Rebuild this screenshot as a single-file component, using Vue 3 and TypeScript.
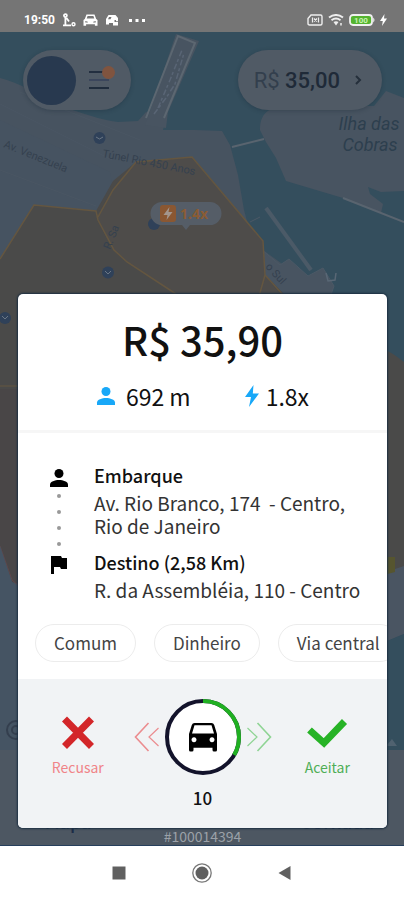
<script setup lang="ts">
import { computed, ref } from 'vue'

interface Stop {
  kind: 'pickup' | 'dropoff'
  title: string
  address: string
}

const stops: Stop[] = [
  { kind: 'pickup', title: 'Embarque', address: 'Av. Rio Branco, 174 \u00a0- Centro,\nRio de Janeiro' },
  { kind: 'dropoff', title: 'Destino (2,58 Km)', address: 'R. da Assembléia, 110 - Centro' },
]

const tags: string[] = ['Comum', 'Dinheiro', 'Via central']

const totalSeconds = 15
const secondsLeft = ref(10)

const radius = 36
const circumference = 2 * Math.PI * radius
const elapsedDash = computed(() => {
  const done = ((totalSeconds - secondsLeft.value) / totalSeconds) * circumference
  return `${done} ${circumference - done}`
})
</script>

<template>
  <div class="phone">
    <div class="status">
      <div class="status-group">
        <span class="clock">19:50</span>
        <svg width="14" height="14" viewBox="0 0 14 14" fill="none" stroke="#fff" stroke-width="1.8">
          <circle cx="3.4" cy="2.6" r="1.5" />
          <path d="M3.4 4v7.6M1 12.3h8M4.500 5l2.500 3.500" />
          <circle cx="11.500" cy="11.300" r="1.500" stroke-width="1.400" />
        </svg>
        <svg width="15" height="14" viewBox="0 0 15 14" fill="#fff" fill-rule="evenodd">
          <path d="M3.500 1.500h8l1.700 4.500 1.300 1v5.800h-2.600v-1.600H3.100v1.600H.5V7l1.300-1zM4.600 3l-.9 2.600h7.600L10.400 3zM2.300 8v1.600h2.500V8.800zM12.700 8v1.600h-2.500V8.800z" />
        </svg>
        <svg width="14" height="14" viewBox="0 0 14 14" fill="#fff" fill-rule="evenodd">
          <path d="M3.500 2h7l2.500 3v3.200h-2V7H9.500v2H13v3.500H8V10H4v1.500H1V6zM4 4L3 6.200h2.500L6.500 4z" />
        </svg>
        <svg class="more" width="16" height="14" viewBox="0 0 16 14" fill="#fff">
          <path d="M0 6h3v3H0zM6.500 6h3v3h-3zM13 6h3v3h-3z" />
        </svg>
      </div>
      <div class="status-group tight">
        <svg width="16" height="12" viewBox="0 0 16 12" fill="none" stroke="#eee" stroke-width="1.400">
          <path d="M4 1h9.500q1.500 0 1.500 1.500v7q0 1.500-1.500 1.500h-11Q1 11 1 9.500V4.500z" />
          <path d="M5.500 3.500v5M11.500 3.500v5M7 4.500l3 3M10 4.500l-3 3" stroke-width="1.200" />
        </svg>
        <svg width="16" height="12" viewBox="0 0 16 12" fill="none" stroke="#eee" stroke-width="2">
          <path d="M1 3.500q7-5 14 0M3.500 6.200q4.500-3.300 9 0" />
          <path d="M5.500 8L8 11.500 10.500 8Q8 6.500 5.500 8z" fill="#eee" stroke="none" />
          <path d="M13 9v2.500" stroke-width="1.500" />
        </svg>
        <svg width="26" height="12" viewBox="0 0 26 12">
          <rect x="1" y="1" width="22" height="10" rx="3" fill="#54b32f" stroke="#f0f0f0" stroke-width="1.800" />
          <path d="M24.200 3.500q2.600 2.500 0 5z" fill="#f0f0f0" />
          <text x="12" y="9" class="charge">100</text>
        </svg>
        <svg width="7" height="12" viewBox="0 0 7 12" fill="#fff"><path d="M4.500 0L0 7h2.800L2 12l5-7.500H4z" /></svg>
      </div>
    </div>

    <main class="stage">
      <svg class="map" viewBox="0 32 404 814" preserveAspectRatio="xMidYMin slice" aria-hidden="true">
        <rect y="32" width="404" height="814" fill="#344e5d" />
        <path d="M0 78C18 82 42 96 60 106C80 112 100 120 118 122L138 121 146 112 166 118 163 130H195L222 131 230 145 238 175 244 210 250 232 263 250 340 306V846H0z" fill="#475360" />
        <path d="M0 120L110 172 113 190 98 216 36 210 0 265z" fill="#465361" />
        <path d="M0 104L112 160M20 92L140 140M0 170L96 206" stroke="#4a5663" fill="none" />
        <path d="M145 125L152 105 176 34 199 41 168 112 166 128z" fill="#485461" />
        <path d="M146 118L178 36 195 43 164 118" fill="none" stroke="#5c6771" stroke-width="2" />
        <path d="M154 114L166 98 175 84 184 53M158 108L170 80 182 50" fill="none" stroke="#596575" stroke-width="1.500" stroke-dasharray="6 2 3 3" />
        <path d="M260 130C260 112 270 106 290 106H374L386 91 404 98V191L381 192 368 187 370 194 383 204 381 213 404 222 343 198 286 181 276 158 266 142z" fill="#485461" />
        <path d="M232 147l32-8M343 198l61 24" stroke="#59646f" stroke-width="2" />
        <path d="M266 208L311 270" stroke="#4b5a67" stroke-width="4" />
        <path d="M250 222l10-5M262 250l18 15 9-6 19 17 15-8 11 18-7 20h-70z" fill="#485461" stroke="#4b5966" />
        <path d="M326 273l2 8 7-1 1-7" fill="none" stroke="#596775" stroke-width="1.500" />
        <path d="M0 259L34 205 96 211 113 181 136 162 192 157 263 241 265 275 284 294 404 360V570L360 580H18L12 580 0 544z" fill="#4a4a49" />
        <path d="M96 217L113 190 136 162 192 157 263 241 265 275 280 294H176L127 262 113 250z" fill="#4e4c4a" />
        <path d="M0 259L34 205 96 211L98 220 114 250 127 262 176 294M98 217L113 190 136 162 192 157 263 241 265 275 284 296M265 275L258 300" fill="none" stroke="#645640" stroke-width="1.500" />
        <path d="M0 389L22 389V585L12 582 0 546z" fill="#494647" />
        <path d="M0 386h24" stroke="#645640" />
        <path d="M0 546L12 580 20 587" fill="none" stroke="#60484c" />
        <path d="M0 546L12 582 22 589V846H0z" fill="#455463" />
        <path d="M380 294h24v68l-24-18z" fill="#344e5d" />
        <path d="M386 572l18-6v68l-24 10z" fill="#4a5562" />
        <path d="M380 644l24-10v118h-24z" fill="#344e5d" />
        <path d="M380 557h15v15l-15 4z" fill="#56552f" />
        <path d="M386 746l6-7 5 7z" fill="#506270" />
        <path d="M0 750h404v96H0z" fill="#4d5762" />
        <g fill="none" stroke="#343f4e" stroke-width="2"><circle cx="16" cy="730" r="9" /><circle cx="16" cy="730" r="4" /></g>
        <g fill="#2f4159"><circle cx="99.500" cy="138" r="6" /><circle cx="108" cy="272.500" r="6" /><circle cx="154" cy="224" r="6" /><circle cx="5" cy="318" r="6" /></g>
        <path d="M96 137l3.500 2 3.500-2M105 271l3 3 3-3M2 316l3 3 3-3" fill="none" stroke="#6b7785" />
        <path d="M162 202h48a11 11 0 0 1 0 23h-20l-4 5-4-5h-20a11 11 0 0 1 0-23z" fill="#555d67" />
        <rect x="160" y="205" width="16" height="17" rx="3" fill="#8a5732" />
        <path d="M169.500 207l-6 8h4l-1 5 6-8h-4z" fill="#a3968d" />
        <text x="180" y="219" class="surge">1.4x</text>
        <text x="3" y="147" transform="rotate(22 3 147)" class="road">Av. Venezuela</text>
        <text x="102" y="157" transform="rotate(11 102 157)" class="road">Túnel Rio 450 Anos</text>
        <text x="265" y="267" transform="rotate(48 265 267)" class="road">o Sul</text>
        <text x="110" y="250" transform="rotate(-68 110 250)" class="road">R. Sa</text>
        <text x="369" y="130" class="island">Ilha das</text>
        <text x="370" y="151" class="island">Cobras</text>
        <text x="68" y="829" class="tab">Mapa</text>
        <text x="338" y="829" class="tab">Jornada</text>
      </svg>

      <header class="top">
        <button class="pill profile" type="button" aria-label="Menu">
          <span class="avatar"></span>
          <svg width="28" height="28" viewBox="0 0 28 28">
            <path d="M4 6h20" stroke="#232f40" stroke-width="2" />
            <path d="M4 14h20" stroke="#3b465c" stroke-width="2" />
            <path d="M4 22h20" stroke="#202d3d" stroke-width="2" />
            <circle cx="23.500" cy="6.500" r="6.500" fill="#80543f" />
          </svg>
        </button>
        <button class="pill balance" type="button">
          <span><span class="currency">R$</span> 35,00</span>
          <svg width="8" height="12" viewBox="0 0 8 12" fill="none" stroke="#252f3b" stroke-width="2"><path d="M2 2l4 4-4 4" /></svg>
        </button>
      </header>

      <section class="offer" role="dialog" aria-labelledby="price">
        <div class="summary">
          <h1 id="price">R$ 35,90</h1>
          <div class="stats">
            <span class="stat">
              <svg width="20" height="20" viewBox="0 0 20 20" fill="#18a8f8"><circle cx="10" cy="5.500" r="4.500" /><path d="M1 19v-2.500C1 13.500 6 12 10 12s9 1.500 9 4.500V19z" /></svg>
              692 m
            </span>
            <span class="stat surge-stat">
              <svg width="14" height="22" viewBox="0 0 14 22" fill="#18a8f8"><path d="M8.500 0L0 12h6L4 22 14 8.500H7.800z" /></svg>
              1.8x
            </span>
          </div>
        </div>

        <div class="details">
          <div v-for="stop in stops" :key="stop.kind" class="stop" :class="stop.kind">
            <div class="track">
              <svg v-if="stop.kind === 'pickup'" width="18" height="18" viewBox="0 0 18 18"><circle cx="9" cy="4.500" r="4.500" /><path d="M0 18v-2.500C0 12.500 5 11 9 11s9 1.500 9 4.500V18z" /></svg>
              <svg v-else width="18" height="18" viewBox="0 0 18 18"><path d="M1 0h10l1 2h5v11h-6l-1-2H4v7H1z" /></svg>
              <div v-if="stop.kind === 'pickup'" class="dots"><i v-for="n in 4" :key="n"></i></div>
            </div>
            <div>
              <h2>{{ stop.title }}</h2>
              <p>{{ stop.address }}</p>
            </div>
          </div>
          <ul class="tags">
            <li v-for="tag in tags" :key="tag">{{ tag }}</li>
          </ul>
        </div>

        <div class="actions">
          <button class="action decline" type="button">
            <svg width="42" height="34" viewBox="0 0 42 34"><path d="M7.500 3L34.500 30.500M34.500 3L7.500 30.500" stroke="#d32629" stroke-width="7" /></svg>
            Recusar
          </button>
          <div class="countdown">
            <div class="dial">
              <svg width="26" height="30" viewBox="0 0 26 30" fill="none" stroke="#eb8c8f"><path d="M14.500 1L1.500 15l13 14" stroke-width="1.600" /><path d="M24.500 6L15 15l9.500 9" stroke-width="1.200" /></svg>
              <svg width="78" height="78" viewBox="-39 -39 78 78">
                <circle :r="radius" fill="#fff" stroke="#13132b" stroke-width="4" />
                <circle :r="radius" fill="none" stroke="#20b022" stroke-width="4" :stroke-dasharray="elapsedDash" transform="rotate(-90)" />
                <path fill-rule="evenodd" d="M-8.500-14h17q2 0 2.700 2L14-3v16q0 1.500-1.500 1.500h-1.500q-1.500 0-1.500-1.500v-2.300h-19V13q0 1.500-1.500 1.500h-1.500Q-14 14.500-14 13V-3l2.800-9q.7-2 2.700-2zM-8.500-11.800L-11-3.500h22L8.500-11.800zM-9 .3a2.500 2.500 0 1 0 .01 0zM9 .3a2.500 2.500 0 1 0 .01 0z" />
              </svg>
              <svg width="26" height="30" viewBox="0 0 26 30" fill="none" stroke="#8fd494"><path d="M11.500 1l13 14-13 14" stroke-width="1.600" /><path d="M1.500 6L11 15l-9.500 9" stroke-width="1.200" /></svg>
            </div>
            <span class="seconds">{{ secondsLeft }}</span>
          </div>
          <button class="action accept" type="button">
            <svg width="42" height="34" viewBox="0 0 42 34" fill="none"><path d="M3.500 14L18 27 38.500 5.500" stroke="#27b326" stroke-width="7" /></svg>
            Aceitar
          </button>
        </div>
      </section>
      <p class="ride-id">#100014394</p>
    </main>

    <nav class="system">
      <button type="button" aria-label="Recentes"><svg width="20" height="20" viewBox="0 0 20 20"><path d="M3.500 3.500h13v13h-13z" fill="#606060" /></svg></button>
      <button type="button" aria-label="Início"><svg width="20" height="20" viewBox="0 0 20 20"><circle cx="10" cy="10" r="9.200" fill="none" stroke="#777" stroke-width="1.300" /><circle cx="10" cy="10" r="6.500" fill="#606060" /></svg></button>
      <button type="button" aria-label="Voltar"><svg width="20" height="20" viewBox="0 0 20 20"><path d="M15.500 3v14L3.500 10z" fill="#606060" /></svg></button>
    </nav>
  </div>
</template>

<style>
body {
  margin: 0;
}
</style>

<style scoped>
.phone {
  min-height: 100vh;
  display: flex;
  flex-direction: column;
  font-family: "Noto Sans CJK SC", "Noto Sans", sans-serif;
  color: #111;
}

h1,
h2,
p,
ul {
  margin: 0;
  padding: 0;
}

button {
  padding: 0;
  border: 0;
  background: none;
  font: inherit;
  cursor: pointer;
}

svg {
  display: block;
  flex: none;
}

.status {
  height: 32px;
  padding: 8px 17px 0 24px;
  box-sizing: border-box;
  display: flex;
  justify-content: space-between;
  background: #757575;
  color: #fff;
}

.status-group {
  height: 24px;
  display: flex;
  align-items: center;
  gap: 7px;
}

.status-group.tight {
  gap: 5px;
}

.clock {
  font: 700 12px/24px Roboto, sans-serif;
}

.more {
  margin-left: 3px;
}

.charge {
  font: 700 8px Roboto, sans-serif;
  fill: #c7f3b2;
  text-anchor: middle;
}

.stage {
  position: relative;
  flex: 1;
  display: flex;
  flex-direction: column;
  padding: 18px 17px 0 18px;
  border-bottom: 1px solid #263f5c;
}

.map {
  position: absolute;
  inset: 0;
  width: 100%;
  height: 100%;
}

.road {
  font: 11px Roboto, sans-serif;
  fill: #35414f;
}

.island {
  font: italic 18px Roboto, sans-serif;
  fill: #2d3f4e;
  text-anchor: middle;
}

.surge {
  font: 700 14px "Noto Sans", sans-serif;
  fill: #8a5c34;
}

.tab {
  font: 500 18px "Noto Sans CJK SC", sans-serif;
  fill: #1c2c48;
  text-anchor: middle;
}

.top {
  position: relative;
  display: flex;
  justify-content: space-between;
  padding: 0 5px;
}

.pill {
  height: 60px;
  border-radius: 30px;
  display: flex;
  align-items: center;
  background: #505a65;
  box-shadow: 0 1px 4px rgba(20, 35, 50, 0.3);
}

.profile {
  gap: 9px;
  padding: 0 18px 0 4px;
}

.profile svg {
  overflow: visible;
}

.avatar {
  width: 49px;
  height: 49px;
  border-radius: 50%;
  background: #28394f;
}

.balance {
  gap: 14px;
  padding: 0 20px 0 16px;
  font: 500 22px Roboto, sans-serif;
  color: #1f2a38;
}

.currency {
  font-weight: 400;
  color: #333f4d;
}

.offer {
  position: relative;
  margin-top: auto;
  border-radius: 5px;
  overflow: hidden;
  background: #fff;
  box-shadow: 0 0 2px 1px #1c2f42;
}

.summary {
  padding: 20px 0;
  border-bottom: 3px solid #f6f6f6;
  text-align: center;
}

h1 {
  font-size: 40px;
  line-height: 50px;
  font-weight: 500;
}

.stats {
  margin-top: 18px;
  display: flex;
  justify-content: center;
  gap: 54px;
  font-size: 23px;
  line-height: 28px;
}

.stat {
  display: flex;
  align-items: center;
  gap: 10px;
}

.surge-stat {
  gap: 7px;
}

.details {
  padding: 28px 0 17px;
}

.stop {
  display: flex;
  gap: 26px;
  padding-left: 32px;
}

.pickup {
  padding-bottom: 11px;
}

.track {
  padding-top: 8px;
  display: flex;
  flex-direction: column;
}

.dots {
  flex: 1;
  display: flex;
  flex-direction: column;
  align-items: center;
  justify-content: space-between;
  margin: 7px 0 -9px;
}

.dots i {
  width: 4px;
  height: 4px;
  border-radius: 50%;
  background: #999;
}

h2 {
  margin-bottom: 2px;
  font-size: 18px;
  line-height: 28px;
  font-weight: 500;
}

.stop p {
  font-size: 19px;
  line-height: 23px;
  color: #333;
  white-space: pre-line;
}

.tags {
  display: flex;
  gap: 18px;
  margin-top: 23px;
  padding-left: 17px;
  overflow: hidden;
  list-style: none;
}

.tags li {
  flex: none;
  padding: 0 18px;
  border: 1px solid #ececec;
  border-radius: 19px;
  font-size: 17px;
  line-height: 36px;
  color: #444;
}

.actions {
  display: grid;
  grid-template-columns: 1fr auto 1fr;
  align-items: start;
  padding: 19px 4px 18px;
  background: #f1f3f5;
}

.action {
  justify-self: center;
  margin-top: 18px;
  display: flex;
  flex-direction: column;
  align-items: center;
  gap: 7px;
  font-size: 14px;
  line-height: 20px;
}

.decline {
  color: #f08488;
}

.accept {
  color: #4fae55;
}

.countdown {
  display: flex;
  flex-direction: column;
  align-items: center;
  gap: 10px;
}

.dial {
  display: flex;
  align-items: center;
  gap: 4px;
}

.seconds {
  font-size: 17px;
  line-height: 24px;
  font-weight: 500;
}

.ride-id {
  position: relative;
  font-size: 14px;
  line-height: 16px;
  padding-bottom: 1px;
  text-align: center;
  color: #9ba1a8;
}

.system {
  height: 54px;
  display: flex;
  align-items: center;
  justify-content: center;
  gap: 63px;
  background: #fff;
}
</style>
